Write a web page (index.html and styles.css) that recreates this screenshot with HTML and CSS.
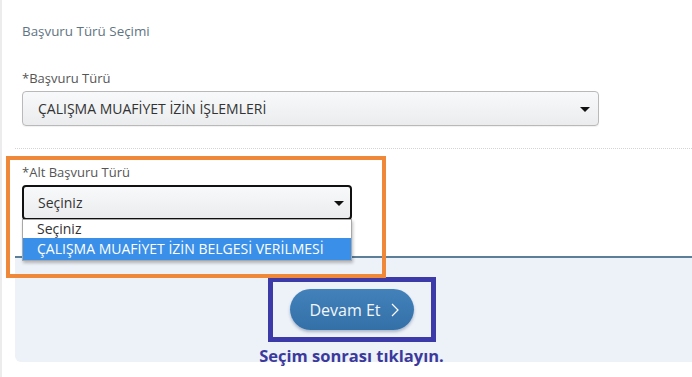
FILE: index.html
```html
<!DOCTYPE html>
<html lang="tr">
  <head>
    <meta charset="UTF-8" />
    <meta name="viewport" content="width=device-width, initial-scale=1.0" />
    <title>Başvuru Türü Seçimi</title>
    <link rel="stylesheet" href="styles.css">
  </head>
  <body>
    <div class="page">
      <h2 class="section-title">Başvuru Türü Seçimi</h2>

      <div class="form-group">
        <label>*Başvuru Türü</label>
        <div class="fake-select wide">ÇALIŞMA MUAFİYET İZİN İŞLEMLERİ</div>
      </div>

      <div class="sub-section">
        <div class="form-group">
          <label>*Alt Başvuru Türü</label>
          <div class="select-wrap">
            <div class="fake-select narrow focused">Seçiniz</div>
            <ul class="option-list">
              <li>Seçiniz</li>
              <li class="selected">ÇALIŞMA MUAFİYET İZİN BELGESİ VERİLMESİ</li>
            </ul>
          </div>
        </div>
      </div>

      <div class="action-panel">
        <div class="mark-blue">
          <button class="next-btn">
            Devam Et
            <svg width="10" height="16" viewBox="0 0 10 16">
              <polyline points="2,2 8,8 2,14" fill="none" stroke="#fff" stroke-width="1.2" />
            </svg>
          </button>
        </div>
        <p class="hint">Seçim sonrası tıklayın.</p>
      </div>

      <div class="mark-orange"></div>
    </div>
  </body>
</html>
```

FILE: styles.css
```css
* {
  margin: 0;
  padding: 0;
  box-sizing: border-box;
  font-family: "Open Sans", "DejaVu Sans", sans-serif;
}

body {
  background-color: #fff;
  width: 692px;
  height: 377px;
  overflow: hidden;
}

.page {
  position: relative;
  border-left: 2px solid #ececec;
  height: 377px;
}

.section-title {
  font-size: 13.4px;
  font-weight: 400;
  line-height: 18px;
  color: #5f7482;
  padding: 22px 0 0 20px;
}

.form-group {
  padding-left: 20px;
}

.form-group label {
  display: block;
  font-size: 13px;
  line-height: 18px;
  color: #555;
  margin-bottom: 4px;
}

.page > .form-group {
  margin-top: 29px;
}

.fake-select {
  position: relative;
  height: 35px;
  padding-left: 15px;
  font-size: 14px;
  line-height: 33px;
  color: #333;
  border: 1px solid #b9b9b9;
  border-radius: 4px;
  background: linear-gradient(#f8f9fa, #eaecee);
  box-shadow: 0 1px 1px rgba(0, 0, 0, 0.06);
}

.fake-select::after {
  content: "";
  position: absolute;
  right: 8px;
  top: 15px;
  border-left: 5px solid transparent;
  border-right: 5px solid transparent;
  border-top: 5px solid #111;
}

.wide {
  width: 577px;
}

.narrow {
  width: 330px;
}

.focused {
  border: 2px solid #111;
  padding-left: 14px;
  line-height: 31px;
}

.focused::after {
  top: 14px;
  right: 6px;
}

.sub-section {
  margin: 22px 0 0 13px;
  border-top: 1px dotted #d4d4d4;
  padding-top: 14px;
  height: 108px;
}

.sub-section .form-group {
  padding-left: 7px;
}

.select-wrap {
  position: relative;
}

.option-list {
  position: absolute;
  top: 34px;
  left: 0;
  width: 330px;
  list-style: none;
  background-color: #fff;
  border: 1px solid #a8a8a8;
  box-shadow: 1px 2px 3px rgba(0, 0, 0, 0.25);
  z-index: 5;
}

.option-list li {
  font-size: 14px;
  line-height: 18px;
  padding-left: 14px;
  color: #333;
}

.option-list li.selected {
  background-color: #3a8fe8;
  color: #fff;
  line-height: 22px;
}

.action-panel {
  margin-left: 13px;
  height: 106px;
  border-top: 2px solid #5c7e98;
  background-color: #edf1f8;
  border-bottom-left-radius: 6px;
  padding-top: 19px;
  display: flex;
  flex-direction: column;
  align-items: center;
}

.mark-blue {
  border: 5px solid #3c3aa9;
  padding: 7px 17px;
  margin-left: -4px;
}

.next-btn {
  width: 124px;
  height: 41px;
  border: none;
  border-radius: 21px;
  background: linear-gradient(#4281ba, #3470a8);
  box-shadow: 0 2px 3px rgba(40, 70, 110, 0.35);
  color: #f2f6fb;
  font-size: 16px;
  display: flex;
  align-items: center;
  justify-content: center;
  gap: 9px;
  padding-left: 6px;
}

.hint {
  margin-top: 4px;
  margin-left: -4px;
  font-size: 16.5px;
  font-weight: 700;
  line-height: 20px;
  color: #3b3a9c;
}

.mark-orange {
  position: absolute;
  left: 4px;
  top: 156px;
  width: 380px;
  height: 122px;
  border: 4px solid #f0883a;
  pointer-events: none;
}
```
